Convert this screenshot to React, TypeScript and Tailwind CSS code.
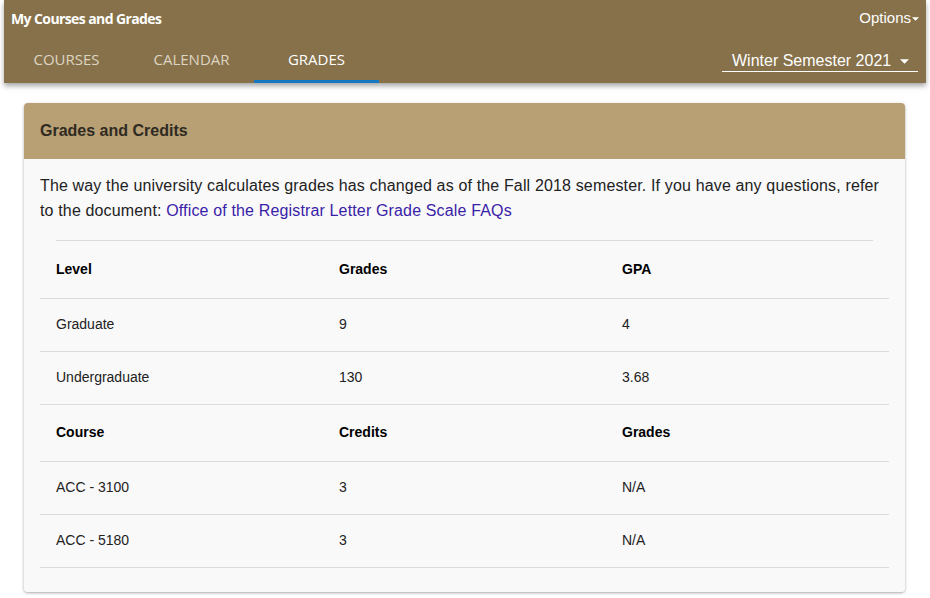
import { useState } from "react";

type Row = { cells: [string, string, string]; head?: boolean };

const rows: Row[] = [
  { cells: ["Level", "Grades", "GPA"], head: true },
  { cells: ["Graduate", "9", "4"] },
  { cells: ["Undergraduate", "130", "3.68"] },
  { cells: ["Course", "Credits", "Grades"], head: true },
  { cells: ["ACC - 3100", "3", "N/A"] },
  { cells: ["ACC - 5180", "3", "N/A"] },
];

const tabs = ["COURSES", "CALENDAR", "GRADES"];

function Caret({ className }: { className?: string }) {
  return (
    <svg viewBox="0 0 10 5" className={className} aria-hidden="true">
      <path d="M0 0h10L5 5z" fill="currentColor" />
    </svg>
  );
}

export default function App() {
  const [active, setActive] = useState("GRADES");

  return (
    <div className="min-h-screen bg-white font-['Liberation_Sans',Arial,sans-serif]">
      {/* Top bar */}
      <header className="relative z-10 mx-1 flex h-[83px] flex-col bg-[#86714a] shadow-[0_3px_5px_rgba(0,0,0,0.35)]">
        <div className="flex h-[37px] items-center justify-between pl-[7px] pr-[7px]">
          <span className="font-['Open_Sans',sans-serif] text-[14px] font-bold tracking-[-0.6px] text-white">
            My Courses and Grades
          </span>
          <button className="flex items-center text-[15px] text-white">
            Options
            <Caret className="ml-[1px] h-[4px] w-[7px]" />
          </button>
        </div>
        <div className="flex flex-1 items-stretch justify-between">
          <nav className="flex">
            {tabs.map((t) => (
              <button
                key={t}
                onClick={() => setActive(t)}
                className={
                  "flex w-[125px] items-center justify-center border-b-[3px] pt-[1px] font-['Open_Sans',sans-serif] text-[15px] " +
                  (active === t
                    ? "border-[#1479c2] text-white"
                    : "border-transparent text-[#ddd4c2]")
                }
              >
                {t}
              </button>
            ))}
          </nav>
          <div className="mb-[11px] mr-[8px] flex w-[196px] items-end">
            <div className="flex w-full items-center justify-between border-b border-white pb-[1px] pl-[10px] pr-[9px] text-[16px] leading-[18px] text-white">
              <span>Winter Semester 2021</span>
              <Caret className="h-[5px] w-[9px]" />
            </div>
          </div>
        </div>
      </header>

      {/* Card */}
      <section className="ml-6 mr-[25px] mt-5 overflow-hidden rounded-[4px] shadow-[0_1px_3px_rgba(0,0,0,0.35)]">
        <div className="flex h-[56px] items-center bg-[#b89f74] px-4">
          <h2 className="text-[16px] font-bold text-[#2f2a22]">Grades and Credits</h2>
        </div>
        <div className="bg-[#f9f9f9] px-4 pb-6 pt-[14px]">
          <p className="text-[16px] leading-[25px] tracking-[0.15px] text-[#222]">
            The way the university calculates grades has changed as of the Fall 2018 semester. If you
            have any questions, refer to the document:{" "}
            <a href="#" className="text-[#3a22a8]">
              Office of the Registrar Letter Grade Scale FAQs
            </a>
          </p>
          <hr className="mx-4 mt-[17px] border-[#dcdcdc]" />
          <table className="w-full table-fixed text-[14px]">
            <tbody>
              {rows.map((r, i) => (
                <tr key={i} className="border-b border-[#dcdcdc]">
                  {r.cells.map((c, j) => (
                    <td
                      key={j}
                      className={
                        "px-4 " +
                        (r.head ? "h-[57px] font-bold text-black" : "h-[53px] text-[#222]")
                      }
                    >
                      {c}
                    </td>
                  ))}
                </tr>
              ))}
            </tbody>
          </table>
        </div>
      </section>
    </div>
  );
}
